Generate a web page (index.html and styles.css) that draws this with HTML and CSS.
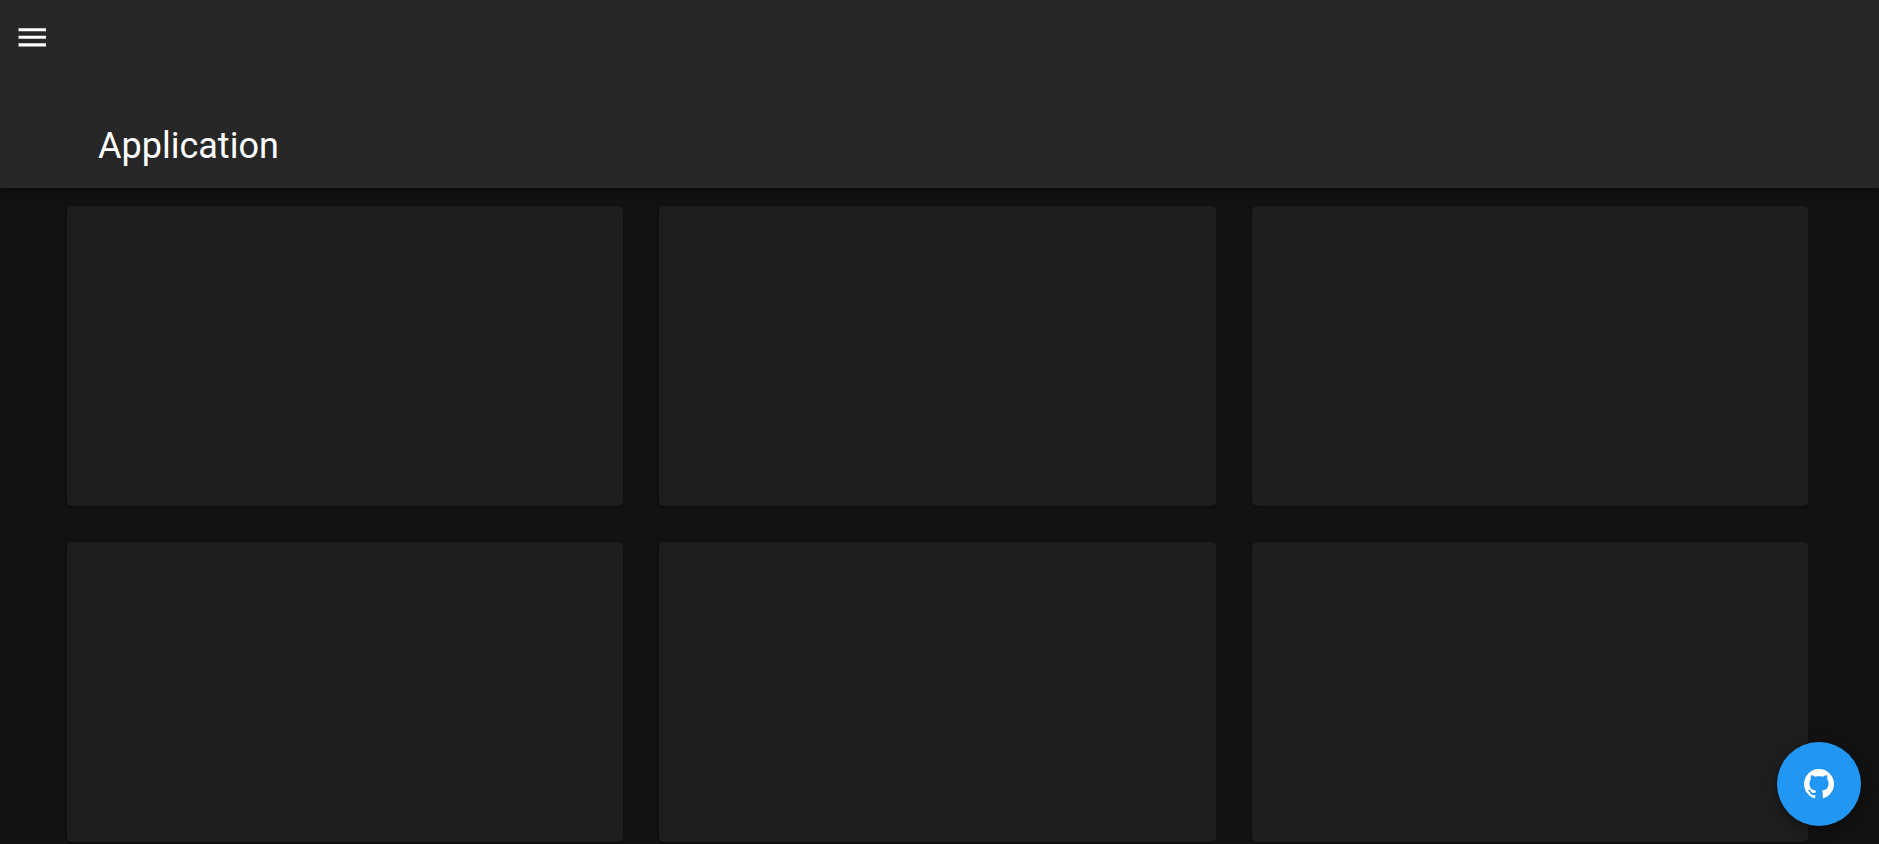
FILE: index.html
```html
<!DOCTYPE html>
<html lang="en">
<head>
<meta charset="utf-8">
<title>Application</title>
<link rel="stylesheet" href="styles.css">
</head>
<body>
<header class="app-bar">
  <div class="toolbar">
    <button class="nav-icon" aria-label="Menu">
      <svg viewBox="0 0 24 24" class="icon"><path d="M3,6H21V8H3V6M3,11H21V13H3V11M3,16H21V18H3V16Z"/></svg>
    </button>
  </div>
  <h1 class="title">Application</h1>
</header>
<main class="grid">
  <div class="card"></div>
  <div class="card"></div>
  <div class="card"></div>
  <div class="card"></div>
  <div class="card"></div>
  <div class="card"></div>
</main>
<a class="fab" aria-label="GitHub">
  <svg viewBox="0 0 24 24" class="fab-icon"><path d="M12,2A10,10 0 0,0 2,12C2,16.42 4.87,20.17 8.84,21.5C9.34,21.58 9.5,21.27 9.5,21C9.5,20.77 9.5,20.14 9.5,19.31C6.73,19.91 6.14,17.97 6.14,17.97C5.68,16.81 5.03,16.5 5.03,16.5C4.12,15.88 5.1,15.9 5.1,15.9C6.1,15.97 6.63,16.93 6.63,16.93C7.5,18.45 8.97,18 9.54,17.76C9.63,17.11 9.89,16.67 10.17,16.42C7.95,16.17 5.62,15.31 5.62,11.5C5.62,10.39 6,9.5 6.65,8.79C6.55,8.54 6.2,7.5 6.75,6.15C6.75,6.15 7.59,5.88 9.5,7.17C10.29,6.95 11.15,6.84 12,6.84C12.85,6.84 13.71,6.95 14.5,7.17C16.41,5.88 17.25,6.15 17.25,6.15C17.8,7.5 17.45,8.54 17.35,8.79C18,9.5 18.38,10.39 18.38,11.5C18.38,15.32 16.04,16.16 13.81,16.41C14.17,16.72 14.5,17.33 14.5,18.26C14.5,19.6 14.5,20.68 14.5,21C14.5,21.27 14.66,21.59 15.17,21.5C19.14,20.16 22,16.42 22,12A10,10 0 0,0 12,2Z"/></svg>
</a>
</body>
</html>
```
FILE: styles.css
```css
html, body {
  margin: 0;
  height: 100%;
  overflow: hidden;
  background: #121212;
  font-family: Roboto, "Liberation Sans", sans-serif;
}
.app-bar {
  height: 188px;
  box-sizing: border-box;
  background: #272727;
  color: #fff;
  display: flex;
  flex-direction: column;
  box-shadow: 0 2px 5px -1px rgba(0,0,0,.2), 0 5px 6px 0 rgba(0,0,0,.14), 0 1px 12px 0 rgba(0,0,0,.12);
  position: relative;
}
.toolbar {
  height: 75.4px;
  padding-left: 13.75px;
  display: flex;
  align-items: center;
  flex: none;
}
.nav-icon {
  width: 36.5px;
  height: 36.5px;
  padding: 0;
  border: 0;
  background: none;
  display: flex;
  align-items: center;
  justify-content: center;
}
.icon {
  width: 36.5px;
  height: 36.5px;
  flex: none;
  fill: #fff;
}
.title {
  margin: auto 0 20px 98px;
  font-size: 36px;
  font-weight: 400;
  line-height: 1.2;
}
.grid {
  display: grid;
  grid-template-columns: repeat(3, 1fr);
  grid-auto-rows: 300px;
  gap: 36px;
  padding: 18px 71px 0 67px;
}
.card {
  background: #1e1e1e;
  border-radius: 4.8px;
  box-shadow: 0 2px 1px -1px rgba(0,0,0,.2), 0 1px 1px 0 rgba(0,0,0,.14), 0 1px 3px 0 rgba(0,0,0,.12);
}
.fab {
  position: fixed;
  right: 18px;
  bottom: 18px;
  width: 84px;
  height: 84px;
  border-radius: 50%;
  background: #2196f3;
  display: flex;
  align-items: center;
  justify-content: center;
  box-shadow: 0 3px 6px -1px rgba(0,0,0,.2), 0 7px 12px 1px rgba(0,0,0,.14), 0 2px 20px 1px rgba(0,0,0,.12);
}
.fab-icon {
  width: 36px;
  height: 36px;
  fill: #fff;
}
```
